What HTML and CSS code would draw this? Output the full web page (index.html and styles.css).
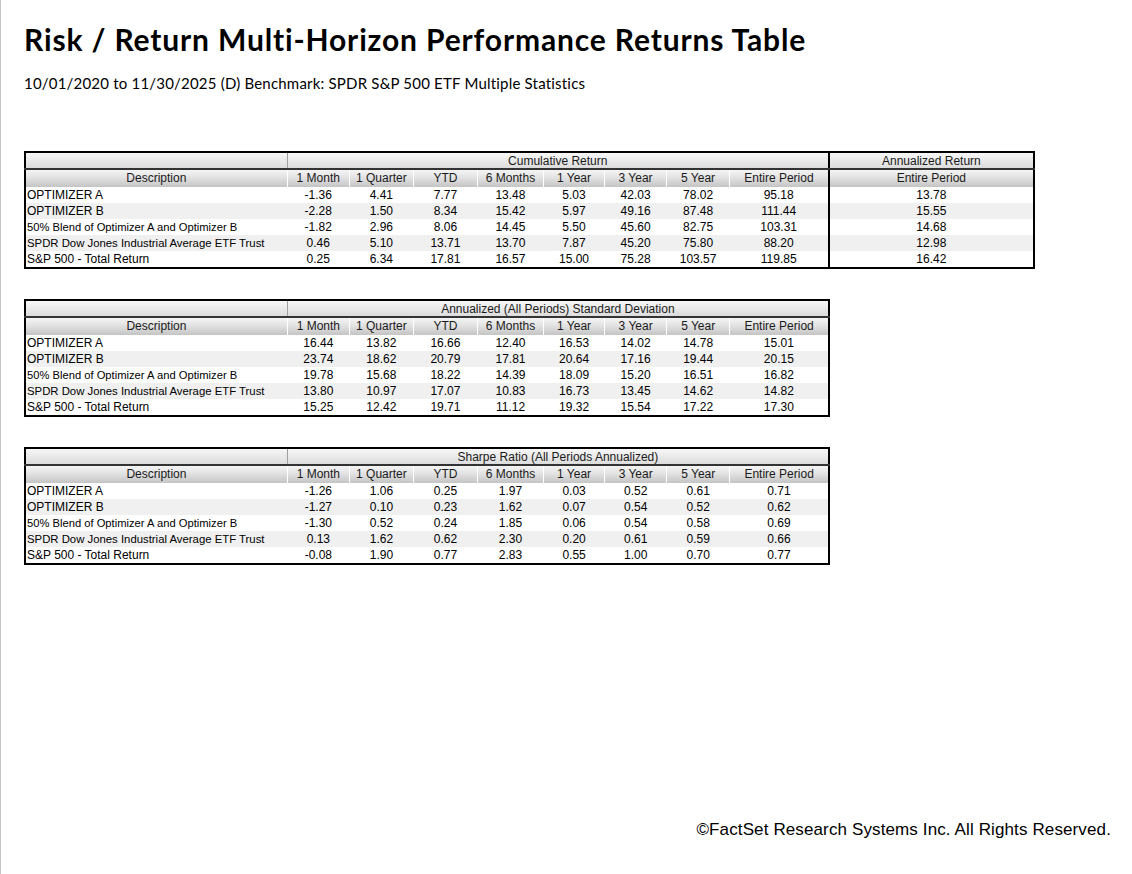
FILE: index.html
```html
<!DOCTYPE html>
<html>
<head>
<meta charset="utf-8">
<link rel="stylesheet" href="styles.css">
</head>
<body>
<div class="page">
  <h1 class="title">Risk / Return Multi-Horizon Performance Returns Table</h1>
  <p class="subtitle">10/01/2020 to 11/30/2025 (D) Benchmark: SPDR S&amp;P 500 ETF Multiple Statistics</p>

  <table class="grid wide">
    <colgroup>
      <col class="c-desc"><col class="c-m"><col class="c-q"><col class="c-ytd"><col class="c-6m"><col class="c-1y"><col class="c-3y"><col class="c-5y"><col class="c-ep"><col class="c-ann">
    </colgroup>
    <thead>
      <tr class="grp">
        <th class="gdesc"></th>
        <th colspan="8">Cumulative Return</th>
        <th class="sep">Annualized Return</th>
      </tr>
      <tr class="sub">
        <th class="first">Description</th><th>1 Month</th><th>1 Quarter</th><th>YTD</th><th>6 Months</th><th>1 Year</th><th>3 Year</th><th>5 Year</th><th>Entire Period</th><th class="sep">Entire Period</th>
      </tr>
    </thead>
    <tbody>
      <tr><td class="d">OPTIMIZER A</td><td>-1.36</td><td>4.41</td><td>7.77</td><td>13.48</td><td>5.03</td><td>42.03</td><td>78.02</td><td>95.18</td><td class="sep">13.78</td></tr>
      <tr><td class="d">OPTIMIZER B</td><td>-2.28</td><td>1.50</td><td>8.34</td><td>15.42</td><td>5.97</td><td>49.16</td><td>87.48</td><td>111.44</td><td class="sep">15.55</td></tr>
      <tr><td class="d sm">50% Blend of Optimizer A and Optimizer B</td><td>-1.82</td><td>2.96</td><td>8.06</td><td>14.45</td><td>5.50</td><td>45.60</td><td>82.75</td><td>103.31</td><td class="sep">14.68</td></tr>
      <tr><td class="d sm2">SPDR Dow Jones Industrial Average ETF Trust</td><td>0.46</td><td>5.10</td><td>13.71</td><td>13.70</td><td>7.87</td><td>45.20</td><td>75.80</td><td>88.20</td><td class="sep">12.98</td></tr>
      <tr><td class="d">S&amp;P 500 - Total Return</td><td>0.25</td><td>6.34</td><td>17.81</td><td>16.57</td><td>15.00</td><td>75.28</td><td>103.57</td><td>119.85</td><td class="sep">16.42</td></tr>
    </tbody>
  </table>

  <table class="grid narrow">
    <colgroup>
      <col class="c-desc"><col class="c-m"><col class="c-q"><col class="c-ytd"><col class="c-6m"><col class="c-1y"><col class="c-3y"><col class="c-5y"><col class="c-ep">
    </colgroup>
    <thead>
      <tr class="grp">
        <th class="gdesc"></th>
        <th colspan="8">Annualized (All Periods) Standard Deviation</th>
      </tr>
      <tr class="sub">
        <th class="first">Description</th><th>1 Month</th><th>1 Quarter</th><th>YTD</th><th>6 Months</th><th>1 Year</th><th>3 Year</th><th>5 Year</th><th>Entire Period</th>
      </tr>
    </thead>
    <tbody>
      <tr><td class="d">OPTIMIZER A</td><td>16.44</td><td>13.82</td><td>16.66</td><td>12.40</td><td>16.53</td><td>14.02</td><td>14.78</td><td>15.01</td></tr>
      <tr><td class="d">OPTIMIZER B</td><td>23.74</td><td>18.62</td><td>20.79</td><td>17.81</td><td>20.64</td><td>17.16</td><td>19.44</td><td>20.15</td></tr>
      <tr><td class="d sm">50% Blend of Optimizer A and Optimizer B</td><td>19.78</td><td>15.68</td><td>18.22</td><td>14.39</td><td>18.09</td><td>15.20</td><td>16.51</td><td>16.82</td></tr>
      <tr><td class="d sm2">SPDR Dow Jones Industrial Average ETF Trust</td><td>13.80</td><td>10.97</td><td>17.07</td><td>10.83</td><td>16.73</td><td>13.45</td><td>14.62</td><td>14.82</td></tr>
      <tr><td class="d">S&amp;P 500 - Total Return</td><td>15.25</td><td>12.42</td><td>19.71</td><td>11.12</td><td>19.32</td><td>15.54</td><td>17.22</td><td>17.30</td></tr>
    </tbody>
  </table>

  <table class="grid narrow">
    <colgroup>
      <col class="c-desc"><col class="c-m"><col class="c-q"><col class="c-ytd"><col class="c-6m"><col class="c-1y"><col class="c-3y"><col class="c-5y"><col class="c-ep">
    </colgroup>
    <thead>
      <tr class="grp">
        <th class="gdesc"></th>
        <th colspan="8">Sharpe Ratio (All Periods Annualized)</th>
      </tr>
      <tr class="sub">
        <th class="first">Description</th><th>1 Month</th><th>1 Quarter</th><th>YTD</th><th>6 Months</th><th>1 Year</th><th>3 Year</th><th>5 Year</th><th>Entire Period</th>
      </tr>
    </thead>
    <tbody>
      <tr><td class="d">OPTIMIZER A</td><td>-1.26</td><td>1.06</td><td>0.25</td><td>1.97</td><td>0.03</td><td>0.52</td><td>0.61</td><td>0.71</td></tr>
      <tr><td class="d">OPTIMIZER B</td><td>-1.27</td><td>0.10</td><td>0.23</td><td>1.62</td><td>0.07</td><td>0.54</td><td>0.52</td><td>0.62</td></tr>
      <tr><td class="d sm">50% Blend of Optimizer A and Optimizer B</td><td>-1.30</td><td>0.52</td><td>0.24</td><td>1.85</td><td>0.06</td><td>0.54</td><td>0.58</td><td>0.69</td></tr>
      <tr><td class="d sm2">SPDR Dow Jones Industrial Average ETF Trust</td><td>0.13</td><td>1.62</td><td>0.62</td><td>2.30</td><td>0.20</td><td>0.61</td><td>0.59</td><td>0.66</td></tr>
      <tr><td class="d">S&amp;P 500 - Total Return</td><td>-0.08</td><td>1.90</td><td>0.77</td><td>2.83</td><td>0.55</td><td>1.00</td><td>0.70</td><td>0.77</td></tr>
    </tbody>
  </table>

  <div class="footer">©FactSet Research Systems Inc. All Rights Reserved.</div>
</div>
</body>
</html>
```

FILE: styles.css
```css
html, body {
  margin: 0;
  padding: 0;
  background: #ffffff;
}

.page {
  box-sizing: border-box;
  height: 874px;
  border-left: 1px solid #c4c4c4;
  padding: 0 0 0 23px;
  display: flex;
  flex-direction: column;
  align-items: flex-start;
  font-family: "Liberation Sans", Arial, sans-serif;
  color: #000;
}

.title {
  font-family: "Lato", "Open Sans", sans-serif;
  font-weight: 700;
  font-size: 30px;
  line-height: 36px;
  margin: 21px 0 0 0;
  letter-spacing: 0.85px;
}

.subtitle {
  font-family: "Lato", "Open Sans", sans-serif;
  font-size: 15px;
  line-height: 20px;
  letter-spacing: 0.2px;
  margin: 16px 0 0 0;
}

.grid {
  border-collapse: collapse;
  table-layout: fixed;
  border: 2px solid #000;
  font-size: 12px;
  margin-top: 58px;
}

.grid + .grid {
  margin-top: 30px;
}

.wide { width: 1011px; }
.narrow { width: 806px; }

.c-desc { width: 262px; }
.c-m { width: 62px; }
.c-q { width: 64px; }
.c-ytd { width: 64px; }
.c-6m { width: 66px; }
.c-1y { width: 61px; }
.c-3y { width: 62px; }
.c-5y { width: 63px; }
.c-ep { width: 99px; }
.c-ann { width: 205px; }

.grid th {
  font-weight: 400;
  color: #1a1a1a;
  padding: 0;
  white-space: nowrap;
  text-align: center;
}

.grp th {
  height: 13px;
  line-height: 13px;
  padding-top: 2px;
  background: linear-gradient(#f7f7f7, #dcdcdc);
  border-bottom: 2px solid #333;
}

.grp th.gdesc {
  border-right: 1px solid #a0a0a0;
}

.sub th {
  height: 16px;
  line-height: 17px;
  background: linear-gradient(#f4f4f4 0%, #e2e2e2 45%, #c4c4c4 100%);
  border-left: 1px solid #ffffff;
}

.sub th.first {
  border-left: none;
}

.grid th.sep,
.grid td.sep {
  border-left: 2px solid #000;
}

.grid td {
  height: 16px;
  line-height: 16px;
  padding: 0;
  text-align: center;
  white-space: nowrap;
  overflow: hidden;
}

.grid td.d {
  text-align: left;
  padding-left: 1px;
}

.grid td.sm {
  font-size: 11.2px;
}

.grid td.sm2 {
  font-size: 11.35px;
}

.grid tbody tr:nth-child(even) td {
  background: #f0f0f0;
}

.footer {
  margin-top: auto;
  align-self: flex-end;
  margin-right: 21px;
  margin-bottom: 34px;
  font-size: 17px;
  letter-spacing: 0.12px;
  line-height: 20px;
}
```
